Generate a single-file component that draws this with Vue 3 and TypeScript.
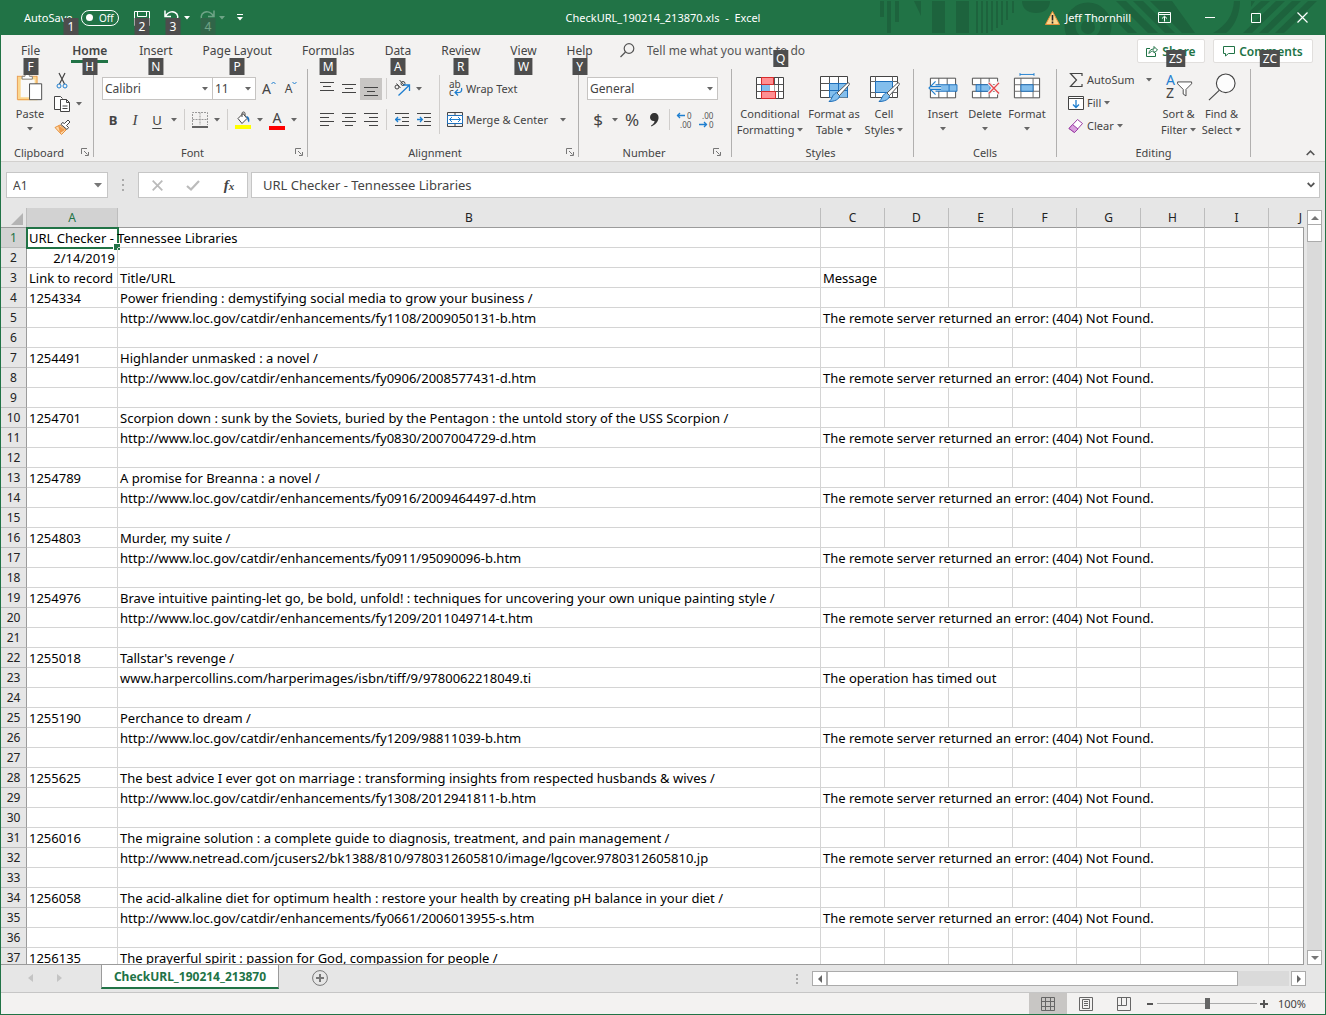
<script setup lang="ts">
import { h, ref } from 'vue'

const Caret = () => h('svg', { class: 'caret', viewBox: '0 0 6 4' }, [h('path', { d: 'M0 0h6L3 3.4z', fill: 'currentColor' })])
const Launcher = () =>
  h('button', { class: 'launcher', type: 'button', 'aria-label': 'More options' }, [
    h('svg', { width: 8, height: 8, viewBox: '0 0 8 8', fill: 'none', stroke: '#777' }, [
      h('path', { d: 'M.5 6V.5H6' }),
      h('path', { d: 'M3 3l3.5 3.5M7.5 4v3.5H4' }),
    ]),
  ])

interface Tab { name: string; key: string }
const tabs: Tab[] = [
  { name: 'File', key: 'F' },
  { name: 'Home', key: 'H' },
  { name: 'Insert', key: 'N' },
  { name: 'Page Layout', key: 'P' },
  { name: 'Formulas', key: 'M' },
  { name: 'Data', key: 'A' },
  { name: 'Review', key: 'R' },
  { name: 'View', key: 'W' },
  { name: 'Help', key: 'Y' },
]
const activeTab = ref('Home')

const columns = ['A', 'B', 'C', 'D', 'E', 'F', 'G', 'H', 'I', 'J']
const notFound = 'The remote server returned an error: (404) Not Found.'
const loc = 'http://www.loc.gov/catdir/enhancements/'

interface RecordEntry { id: string; title: string; url: string; message: string }
const records: RecordEntry[] = [
  { id: '1254334', title: 'Power friending : demystifying social media to grow your business /', url: loc + 'fy1108/2009050131-b.htm', message: notFound },
  { id: '1254491', title: 'Highlander unmasked : a novel /', url: loc + 'fy0906/2008577431-d.htm', message: notFound },
  { id: '1254701', title: 'Scorpion down : sunk by the Soviets, buried by the Pentagon : the untold story of the USS Scorpion /', url: loc + 'fy0830/2007004729-d.htm', message: notFound },
  { id: '1254789', title: 'A promise for Breanna : a novel /', url: loc + 'fy0916/2009464497-d.htm', message: notFound },
  { id: '1254803', title: 'Murder, my suite /', url: loc + 'fy0911/95090096-b.htm', message: notFound },
  { id: '1254976', title: 'Brave intuitive painting-let go, be bold, unfold! : techniques for uncovering your own unique painting style /', url: loc + 'fy1209/2011049714-t.htm', message: notFound },
  { id: '1255018', title: "Tallstar's revenge /", url: 'www.harpercollins.com/harperimages/isbn/tiff/9/9780062218049.ti', message: 'The operation has timed out' },
  { id: '1255190', title: 'Perchance to dream /', url: loc + 'fy1209/98811039-b.htm', message: notFound },
  { id: '1255625', title: 'The best advice I ever got on marriage : transforming insights from respected husbands & wives /', url: loc + 'fy1308/2012941811-b.htm', message: notFound },
  { id: '1256016', title: 'The migraine solution : a complete guide to diagnosis, treatment, and pain management /', url: 'http://www.netread.com/jcusers2/bk1388/810/9780312605810/image/lgcover.9780312605810.jp', message: notFound },
  { id: '1256058', title: 'The acid-alkaline diet for optimum health : restore your health by creating pH balance in your diet /', url: loc + 'fy0661/2006013955-s.htm', message: notFound },
]

type Row = [string, string, string]
const rows: Row[] = [
  ['URL Checker - Tennessee Libraries', '', ''],
  ['2/14/2019', '', ''],
  ['Link to record', 'Title/URL', 'Message'],
  ...records.flatMap((r): Row[] => [[r.id, r.title, ''], ['', r.url, r.message], ['', '', '']]),
  ['1256135', 'The prayerful spirit : passion for God, compassion for people /', ''],
]

// Long messages run over the neighbouring empty cells, which then show no gridline.
function isCovered(row: Row, col: number): boolean {
  const last = row[2] === notFound ? 6 : row[2].startsWith('The operation') ? 3 : -1
  return col >= 2 && col <= last
}

const zoom = ref(50)
const formula = ref('URL Checker - Tennessee Libraries')
const cellName = ref('A1')
</script>

<template>
  <div class="app">
    <header class="title-bar">
      <svg class="pattern" width="446" height="35" viewBox="0 0 446 35" aria-hidden="true">
        <g fill="#1d633d">
          <path d="M1 1h4v16H1zM8 1h4v32H8zM16 1h4v21h-4zM35 1h7v15zM53 1h13v32H53zM77 1h13v32H77zM97 1h2v32h-2zM102 1h2v32h-2zM107 1h2v32h-2zM112 1h2v30h-2zM117 1h2v27h-2zM122 1h2v24h-2zM127 1h2v19h-2zM133 1h2v12h-2z" />
          <path d="M143 1h28c0 8-6 12-14 12s-14-4-14-12z" />
          <circle cx="209" cy="27" r="7" />
          <path d="M237 1h10l32 32h-10zM254 1h10l32 32h-10zM271 1h22l23 32h-13zM237 12l21 21h-9l-12-12zM355 1h6c0 14-6 26-14 32h-13c14-8 20-18 21-32zM372 1h4l-4 6zM382 1h9l-20 18v-8zM397 1h9l-33 32h-9zM413 1h9l-33 32h-9zM429 1h9l-33 32h-9z" />
        </g>
        <circle cx="209" cy="26" r="18" fill="none" stroke="#1d633d" stroke-width="11" />
      </svg>

      <div class="quick">
        <span class="autosave">AutoSave<kbd class="tip tip-auto">1</kbd></span>
        <button type="button" class="toggle" aria-label="AutoSave"><i></i>Off</button>
        <button type="button" class="qbtn save" aria-label="Save">
          <svg width="18" height="18" viewBox="0 0 18 18" fill="none" stroke="#fff"><path d="M1.500 2.500h15v14h-15zM4.500 2.500v5h9v-5M5.500 16v-4h7v4" /></svg>
          <kbd class="tip">2</kbd>
        </button>
        <button type="button" class="qbtn undo" aria-label="Undo">
          <svg width="18" height="18" viewBox="0 0 18 18" fill="none" stroke="#fff" stroke-width="1.500"><path d="M1 1.500v6h6M1.500 7C4 3 8 2 11 3.500s4 6 1 9L9 16" /></svg>
          <kbd class="tip">3</kbd>
        </button>
        <Caret class="qcaret" />
        <button type="button" class="qbtn redo" aria-label="Redo" disabled>
          <svg width="18" height="18" viewBox="0 0 18 18" fill="none" stroke="#fff" stroke-width="1.500"><path d="M15 1.500v6H9M14.500 7C12 3 8 2 5 3.500s-4 6-1 9L8 16" /></svg>
          <kbd class="tip">4</kbd>
        </button>
        <Caret class="qcaret dim" />
        <button type="button" class="customize" aria-label="Customize Quick Access Toolbar">
          <svg width="6" height="7" viewBox="0 0 6 7" fill="#fff"><path d="M0 0h6v1H0zM0 3h6L3 6.500z" /></svg>
        </button>
      </div>

      <h1>CheckURL_190214_213870.xls&nbsp; -&nbsp; Excel</h1>

      <div class="window">
        <svg width="15" height="14" viewBox="0 0 15 14"><path d="M7.500 .5L14.500 13.500H.5z" fill="#fcd58a" stroke="#e8913a" /><path d="M7.500 4v5.500M7.500 10.500v2" stroke="#222" stroke-width="1.600" /></svg>
        <span class="user">Jeff Thornhill</span>
        <button type="button" aria-label="Ribbon Display Options"><svg width="13" height="11" viewBox="0 0 13 11" fill="none" stroke="#fff"><path d="M.5.500h12v10H.5zM.5 2.500h12M6.500 9.500V4.500M4 6.500L6.500 4.200 9 6.500" /></svg></button>
        <button type="button" aria-label="Minimize"><svg width="10" height="10" viewBox="0 0 10 10" stroke="#fff"><path d="M0 4.500h10" /></svg></button>
        <button type="button" aria-label="Maximize"><svg width="10" height="10" viewBox="0 0 10 10" fill="none" stroke="#fff"><path d="M.5.500h9v9h-9z" /></svg></button>
        <button type="button" aria-label="Close"><svg width="11" height="11" viewBox="0 0 11 11" stroke="#fff" stroke-width="1.200"><path d="M.5.500l10 10M10.500.500l-10 10" /></svg></button>
      </div>
    </header>

    <nav class="tabs">
      <button v-for="t in tabs" :key="t.name" type="button" class="tab" :class="{ active: t.name === activeTab }" @click="activeTab = t.name">
        {{ t.name }}<kbd class="tip">{{ t.key }}</kbd>
      </button>
      <label class="tell">
        <svg width="15" height="15" viewBox="0 0 15 15" fill="none" stroke="#555" stroke-width="1.200"><circle cx="9" cy="5.500" r="4.800" /><path d="M5.500 9L.5 14" /></svg>
        <input type="text" placeholder="Tell me what you want to do" aria-label="Tell me what you want to do" />
        <kbd class="tip">Q</kbd>
      </label>
      <div class="actions">
        <button type="button" class="pill">
          <svg width="12" height="12" viewBox="0 0 12 12" fill="none" stroke="#217346"><path d="M4 3.500H.5v8h9V8M3 8.500c0-3 2-4.500 5-4.500V1.500L11.500 5 8 8V6C6 6 4.500 6.500 3 8.500z" /></svg>
          Share<kbd class="tip">ZS</kbd>
        </button>
        <button type="button" class="pill wide">
          <svg width="12" height="12" viewBox="0 0 12 12" fill="none" stroke="#217346"><path d="M.5 1.500h11v7H5.500L2.500 11V8.500h-2z" /></svg>
          Comments<kbd class="tip">ZC</kbd>
        </button>
      </div>
    </nav>

    <section class="ribbon">
      <div class="group clipboard">
        <div class="content">
          <button type="button" class="big paste">
            <svg width="28" height="30" viewBox="0 0 28 30"><path d="M2.500 4.500h18v22h-18z" fill="#fafafa" stroke="#fbd78f" stroke-width="3" /><path d="M.5 2.500h21M.5 2v25.500h13M21.500 2v8" fill="none" stroke="#ea9a49" /><path d="M5.500 5.500v-3h3c0-3 5-3 5 0h3v3z" fill="#fff" stroke="#777" /><path d="M13.500 10.500h13v17h-13z" fill="#fff" stroke="#444" /></svg>
            <span>Paste</span><Caret />
          </button>
          <div class="stack">
            <div class="line"><button type="button" class="ib" aria-label="Cut"><svg width="12" height="16" viewBox="0 0 12 16" fill="none"><path d="M3 0l5.500 11M9 0L3.500 11" stroke="#444" stroke-width="1.200" /><circle cx="3" cy="13" r="2" stroke="#1e7fd0" /><circle cx="9" cy="13" r="2" stroke="#1e7fd0" /></svg></button></div>
            <div class="line"><button type="button" class="ib" aria-label="Copy"><svg width="17" height="16" viewBox="0 0 17 16" fill="#fff" stroke="#444"><path d="M6 13.500H.5v-13h6l2 2" /><path d="M6.500 3.500h6l3 3v9h-9zM12.500 3.500v3h3M8.500 10h5M8.500 12.500h5" /></svg></button><button type="button" class="drop" aria-label="Copy options"><Caret /></button></div>
            <div class="line"><button type="button" class="ib" aria-label="Format Painter"><svg width="17" height="16" viewBox="0 0 17 16"><path d="M1 8.500l5-2.500 6 5-4.500 4.500z" fill="#fbd9ad" stroke="#e8913a" /><path d="M6 14l5-3-7-5" fill="#ee9a4b" /><path d="M7 5.500l6 5 1.500-2-2-2L16 3l-2-2-3.500 3.500L8.500 3.500z" fill="#fff" stroke="#444" /></svg></button></div>
          </div>
        </div>
        <footer><span>Clipboard</span><Launcher /></footer>
      </div>
      <i class="gsep"></i>

      <div class="group font">
        <div class="content col">
          <div class="line">
            <label class="combo face"><select aria-label="Font"><option>Calibri</option></select><Caret /></label>
            <label class="combo size"><select aria-label="Font size"><option>11</option></select><Caret /></label>
            <button type="button" class="ib grow" aria-label="Increase font size"><span class="lg">A</span><svg width="5" height="4" viewBox="0 0 5 4" fill="none" stroke="#1e7fd0"><path d="M.5 3l2-2 2 2" /></svg></button>
            <button type="button" class="ib grow" aria-label="Decrease font size"><span>A</span><svg width="5" height="4" viewBox="0 0 5 4" fill="none" stroke="#1e7fd0"><path d="M.5 1l2 2 2-2" /></svg></button>
          </div>
          <div class="line">
            <button type="button" class="ib b">B</button>
            <button type="button" class="ib i">I</button>
            <button type="button" class="ib u">U</button>
            <button type="button" class="drop" aria-label="Underline options"><Caret /></button>
            <i class="sep"></i>
            <button type="button" class="ib" aria-label="Borders"><svg width="16" height="16" viewBox="0 0 16 16" fill="none"><path d="M.5 13V.5h15V13M8 .5V13M.5 7.500h15" stroke="#999" stroke-dasharray="2 1" /><path d="M0 15h16" stroke="#333" stroke-width="1.500" /></svg></button>
            <button type="button" class="drop" aria-label="Border options"><Caret /></button>
            <i class="sep"></i>
            <button type="button" class="ib" aria-label="Fill color"><svg width="16" height="18" viewBox="0 0 16 18"><path d="M3 7.500L8 2.500l4 5-5 5z" fill="#fff" stroke="#444" /><path d="M7 6V2.500c0-2 3-2 3 0V5" fill="none" stroke="#444" /><path d="M11 5c3 0 4 3 3 6.500-1.500-1-1-3-3-6.500z" fill="#1e6fba" /><path d="M0 14h16v4H0z" fill="#ff0" /></svg></button>
            <button type="button" class="drop" aria-label="Fill color options"><Caret /></button>
            <button type="button" class="ib fc" aria-label="Font color"><span>A</span><i></i></button>
            <button type="button" class="drop" aria-label="Font color options"><Caret /></button>
          </div>
        </div>
        <footer><span>Font</span><Launcher /></footer>
      </div>
      <i class="gsep"></i>

      <div class="group alignment">
        <div class="content">
          <div class="col">
            <div class="line">
              <button type="button" class="ib" aria-label="Top align"><svg width="14" height="16" viewBox="0 0 14 16" stroke="#444"><path d="M0 1.500h14M3 5.500h8M0 9.500h14" /></svg></button>
              <button type="button" class="ib" aria-label="Middle align"><svg width="14" height="16" viewBox="0 0 14 16" stroke="#444"><path d="M0 3.500h14M3 7.500h8M0 11.500h14" /></svg></button>
              <button type="button" class="ib on" aria-label="Bottom align"><svg width="14" height="16" viewBox="0 0 14 16" stroke="#444"><path d="M0 6.500h14M3 10.500h8M0 14.500h14" /></svg></button>
              <i class="sep"></i>
              <button type="button" class="ib" aria-label="Orientation"><svg width="18" height="17" viewBox="0 0 18 17" fill="none"><g stroke="#444"><circle cx="4" cy="7" r="2" /><path d="M3.500 3.500l4 4.500M6.500 0l4.500 5" /><circle cx="10" cy="3.500" r="2" /></g><path d="M5.500 15.500L16 5.500M10.500 5h6v6" stroke="#1e7fd0" stroke-width="1.300" /></svg></button>
              <button type="button" class="drop" aria-label="Orientation options"><Caret /></button>
            </div>
            <div class="line">
              <button type="button" class="ib" aria-label="Align left"><svg width="14" height="14" viewBox="0 0 14 14" stroke="#444"><path d="M0 .5h14M0 4.500h9M0 8.500h14M0 12.500h9" /></svg></button>
              <button type="button" class="ib" aria-label="Center"><svg width="14" height="14" viewBox="0 0 14 14" stroke="#444"><path d="M0 .5h14M3 4.500h8M0 8.500h14M3 12.500h8" /></svg></button>
              <button type="button" class="ib" aria-label="Align right"><svg width="14" height="14" viewBox="0 0 14 14" stroke="#444"><path d="M0 .5h14M5 4.500h9M0 8.500h14M5 12.500h9" /></svg></button>
              <i class="sep"></i>
              <button type="button" class="ib" aria-label="Decrease indent"><svg width="14" height="14" viewBox="0 0 14 14" fill="none" stroke="#444"><path d="M0 .5h14M7 4.500h7M7 8.500h7M0 12.500h14" /><path d="M0 6.500h5.500M3 4L.7 6.500 3 9" stroke="#1e7fd0" stroke-width="1.300" /></svg></button>
              <button type="button" class="ib" aria-label="Increase indent"><svg width="14" height="14" viewBox="0 0 14 14" fill="none" stroke="#444"><path d="M0 .5h14M7 4.500h7M7 8.500h7M0 12.500h14" /><path d="M0 6.500h5.500M3 4l2.300 2.500L3 9" stroke="#1e7fd0" stroke-width="1.300" /></svg></button>
            </div>
          </div>
          <i class="sep long"></i>
          <div class="col">
            <div class="line">
              <button type="button" class="text-btn"><svg class="wrap-icon" width="16" height="18" viewBox="0 0 16 18"><text x="2" y="8">ab</text><text x="2" y="16">c</text><path d="M14.500 8c1 4-1 5-6.500 4.500M11 9.500l-3 3 3 3" fill="none" stroke="#1e7fd0" stroke-width="1.200" /></svg>Wrap Text</button>
            </div>
            <div class="line">
              <button type="button" class="text-btn"><svg width="16" height="16" viewBox="0 0 16 16" fill="none"><path d="M.5 .5h15v14H.5zM.5 3.500h15M.5 11.500h15M8 .5v3M8 11.500v3" stroke="#444" /><path d="M.5 3.500h15v8H.5z" fill="#fff" stroke="#1e6fba" /><path d="M2.500 7.500h11M5 5L2.500 7.500 5 10M11 5l2.500 2.500L11 10" stroke="#1e7fd0" /></svg>Merge &amp; Center</button>
              <button type="button" class="drop merge-drop" aria-label="Merge options"><Caret /></button>
            </div>
          </div>
        </div>
        <footer><span>Alignment</span><Launcher /></footer>
      </div>
      <i class="gsep"></i>

      <div class="group number">
        <div class="content col">
          <div class="line">
            <label class="combo format"><select aria-label="Number format"><option>General</option></select><Caret /></label>
          </div>
          <div class="line">
            <button type="button" class="ib sym">$</button>
            <button type="button" class="drop" aria-label="Currency options"><Caret /></button>
            <button type="button" class="ib sym">%</button>
            <button type="button" class="ib" aria-label="Comma style"><svg width="9" height="14" viewBox="0 0 9 14"><path d="M4 0c3 0 5 2 4.500 5.500C8 9 5 12 1.500 13.500L1 12.500C3.500 11 4.500 9.500 4.500 8 2 8.500 0 6.500 0 4.200S2 0 4 0z" fill="#333" /></svg></button>
            <i class="sep"></i>
            <button type="button" class="ib" aria-label="Increase decimal"><svg class="dec" width="16" height="16" viewBox="0 0 16 16"><text x="10" y="7">0</text><text x="3" y="16">.00</text><path d="M0 3.500h8M3 1L.5 3.500 3 6" /></svg></button>
            <button type="button" class="ib" aria-label="Decrease decimal"><svg class="dec" width="16" height="16" viewBox="0 0 16 16"><text x="3" y="7">.00</text><text x="10" y="16">0</text><path d="M0 12.500h8M5 10l2.500 2.500L5 15" /></svg></button>
          </div>
        </div>
        <footer><span>Number</span><Launcher /></footer>
      </div>
      <i class="gsep"></i>

      <div class="group styles">
        <div class="content">
          <button type="button" class="big cond">
            <svg width="28" height="26" viewBox="0 0 28 26" fill="none"><path d="M.5 2.500h27v21H.5z" fill="#fff" stroke="#444" /><path d="M5.500 2.500v21M18.500 2.500v21M22.500 2.500v21M.5 9.500h27M.5 16.500h27" stroke="#555" /><path d="M5.500 9.500h8v7h-8z" fill="#83beec" stroke="#1e6fba" /><path d="M13.500 10h5v6h-5z" fill="#fff" /><path d="M5.500 2.500h12v7h-12zM5.500 16.500h14v7h-14z" fill="#ff8f92" stroke="#d92b2b" /></svg>
            <span>Conditional</span><span>Formatting <Caret /></span>
          </button>
          <button type="button" class="big fmt">
            <svg width="28" height="28" viewBox="0 0 28 28" fill="none"><path d="M.5 2.500h27v21H.5z" fill="#fff" stroke="#444" /><path d="M9.500 9.500h18v14h-18z" fill="#83beec" /><path d="M9.500 2.500v7M18.500 2.500v7M.5 9.500h9M.5 16.500h9" stroke="#555" /><path d="M9.500 23.500v-14h18v14M18.500 9.500v14M9.500 16.500h18" stroke="#1e6fba" /><path d="M15 19.500c2-2 4.500-.5 4.500 2 0 4-5 6-10.500 6 3-2 3-6 6-8z" fill="#83beec" stroke="#1e6fba" /><path d="M17 19L27 9.500c2-1.500 3 0 2 1.500L19.500 21.500z" fill="#fff" stroke="#555" /></svg>
            <span>Format as</span><span>Table <Caret /></span>
          </button>
          <button type="button" class="big cell">
            <svg width="28" height="28" viewBox="0 0 28 28" fill="none"><path d="M.5 2.500h27v21H.5z" fill="#fff" stroke="#444" /><path d="M5.500 2.500v21M22.500 2.500v21M.5 7.500h27M.5 18.500h27" stroke="#666" /><path d="M5.500 7.500h17v11h-17z" fill="#83beec" stroke="#1e6fba" /><path d="M15 19.500c2-2 4.500-.5 4.500 2 0 4-5 6-10.500 6 3-2 3-6 6-8z" fill="#83beec" stroke="#1e6fba" /><path d="M17 19L27 9.500c2-1.500 3 0 2 1.500L19.500 21.500z" fill="#fff" stroke="#555" /></svg>
            <span>Cell</span><span>Styles <Caret /></span>
          </button>
        </div>
        <footer><span>Styles</span></footer>
      </div>
      <i class="gsep"></i>

      <div class="group cells">
        <div class="content">
          <button type="button" class="big">
            <svg width="32" height="30" viewBox="0 0 32 30" fill="none"><path d="M2.500 4.500h27v21h-27z" fill="#fff" stroke="#444" /><path d="M11.500 4.500v21M20.500 4.500v21" stroke="#555" /><path d="M5 11.500h26v7H5z" fill="#83beec" stroke="#1e6fba" /><path d="M22.500 11.500v7" stroke="#1e6fba" /><path d="M8 8l-7 7 7 7v-4.500h6v-5H8z" fill="#f3f2f1" /><path d="M14 13.500H3M14 16.500H3M8 8l-7 7 7 7" stroke="#1e7fd0" stroke-width="1.200" /></svg>
            <span>Insert</span><Caret />
          </button>
          <button type="button" class="big">
            <svg width="32" height="30" viewBox="0 0 32 30" fill="none"><path d="M2.500 4.500h27v7h-27zM2.500 18.500h27v7h-27z" fill="#fff" stroke="#444" /><path d="M11.500 4.500v7M20.500 4.500v7M11.500 18.500v7M20.500 18.500v7" stroke="#555" /><path d="M6.500 11.500h15v7h-15zM11.500 11.500v7" fill="#83beec" stroke="#1e6fba" /><path d="M20 9l11 12M31 9L20 21" stroke="#f3f2f1" stroke-width="4" /><path d="M20 9.500l11 11.500M31 9.500L20 21" stroke="#e8474c" stroke-width="1.500" /></svg>
            <span>Delete</span><Caret />
          </button>
          <button type="button" class="big">
            <svg width="32" height="30" viewBox="0 0 32 30" fill="none"><path d="M2.500 4.500h27v21h-27z" fill="#fff" stroke="#444" /><path d="M9.500 4.500v21M22.500 4.500v21M2.500 11.500h27M2.500 18.500h27" stroke="#666" /><path d="M9.500 11.500h13v7h-13z" fill="#83beec" stroke="#1e6fba" /><path d="M8.500 .5h15M8.500-1v3M23.500-1v3" stroke="#1e7fd0" /></svg>
            <span>Format</span><Caret />
          </button>
        </div>
        <footer><span>Cells</span></footer>
      </div>
      <i class="gsep"></i>

      <div class="group editing">
        <div class="content">
          <div class="stack wide-stack">
            <div class="line"><button type="button" class="text-btn"><svg width="16" height="16" viewBox="0 0 16 16" fill="none" stroke="#444" stroke-width="1.200"><path d="M14 4V1.500H2.500L8.500 8l-6 6.500H14V12" /></svg>AutoSum</button><button type="button" class="drop sum-drop" aria-label="AutoSum options"><Caret /></button></div>
            <div class="line"><button type="button" class="text-btn"><svg width="16" height="16" viewBox="0 0 16 16" fill="none"><path d="M.5 1.500h15v13H.5z" fill="#fff" stroke="#444" /><path d="M.5 3.500h15" stroke="#444" /><path d="M8 5v7.500M5 9.500l3 3 3-3" stroke="#1e7fd0" stroke-width="1.300" /></svg>Fill<Caret /></button></div>
            <div class="line"><button type="button" class="text-btn"><svg width="16" height="16" viewBox="0 0 16 16"><path d="M9.500 1.500l5 4-8 9-5.500-4z" fill="#fff" stroke="#9b3fa5" /><path d="M4.500 6.500L10 11l-3.500 3.500-5.500-4z" fill="#d9a0de" stroke="#9b3fa5" /></svg>Clear<Caret /></button></div>
          </div>
          <button type="button" class="big">
            <svg class="sort" width="30" height="30" viewBox="0 0 30 30"><text x="1" y="12" fill="#1e7fd0">A</text><text x="1" y="26" fill="#444">Z</text><path d="M13.500 8.500h15v2l-6 6v7l-3-2v-5l-6-6z" fill="#fff" stroke="#444" /></svg>
            <span>Sort &amp;</span><span>Filter <Caret /></span>
          </button>
          <button type="button" class="big">
            <svg width="30" height="30" viewBox="0 0 30 30" fill="none" stroke="#444" stroke-width="1.200"><circle cx="19" cy="10" r="10" fill="#fdfdfd" /><path d="M12 17.500L1 28" /></svg>
            <span>Find &amp;</span><span>Select <Caret /></span>
          </button>
        </div>
        <footer><span>Editing</span></footer>
      </div>
      <i class="gsep"></i>
      <button type="button" class="collapse" aria-label="Collapse the Ribbon"><svg width="9" height="6" viewBox="0 0 9 6" fill="none" stroke="#555" stroke-width="1.600"><path d="M.7 5l3.800-3.800L8.300 5" /></svg></button>
    </section>

    <section class="formula-bar">
      <label class="name-box"><input v-model="cellName" type="text" aria-label="Name Box" /><svg width="8" height="5" viewBox="0 0 8 5"><path d="M0 0h8L4 4.500z" fill="#777" /></svg></label>
      <svg class="grip" width="2" height="12" viewBox="0 0 2 12" fill="#aaa"><path d="M0 0h2v2H0zM0 5h2v2H0zM0 10h2v2H0z" /></svg>
      <div class="fx">
        <button type="button" aria-label="Cancel"><svg width="11" height="11" viewBox="0 0 11 11" stroke="#bbb" stroke-width="1.800"><path d="M.7.700l9.600 9.600M10.300.700L.7 10.300" /></svg></button>
        <button type="button" aria-label="Enter"><svg width="14" height="11" viewBox="0 0 14 11" fill="none" stroke="#bbb" stroke-width="2.200"><path d="M1 6l4 3.500L13 1" /></svg></button>
        <button type="button" class="fx-btn" aria-label="Insert Function"><span>f</span><small>x</small></button>
      </div>
      <label class="formula"><input v-model="formula" type="text" aria-label="Formula" /><svg width="8" height="6" viewBox="0 0 8 6" fill="none" stroke="#555" stroke-width="1.800"><path d="M.7 1L4 4.300 7.300 1" /></svg></label>
    </section>

    <main class="sheet-area">
      <div class="sheet">
        <table>
          <colgroup><col class="c-num" /><col class="c-a" /><col class="c-b" /><col v-for="n in 8" :key="n" class="c-x" /></colgroup>
          <thead>
            <tr>
              <th class="corner"><svg width="12" height="12" viewBox="0 0 12 12" fill="#b4b4b4"><path d="M12 0v12H0z" /></svg></th>
              <th v-for="c in columns" :key="c" scope="col" :class="{ sel: c === 'A' }">{{ c }}</th>
            </tr>
          </thead>
          <tbody>
            <tr v-for="(r, i) in rows" :key="i">
              <th scope="row" :class="{ sel: i === 0 }">{{ i + 1 }}</th>
              <td v-for="(c, j) in columns" :key="c" :class="{ covered: isCovered(r, j), date: i === 1 && j === 0 }">
                <span v-if="i === 0 && j === 0" class="selection"></span><span class="value">{{ r[j] ?? '' }}</span>
              </td>
            </tr>
          </tbody>
        </table>
      </div>
      <div class="vscroll">
        <button type="button" aria-label="Scroll up"><svg width="8" height="4" viewBox="0 0 8 4"><path d="M4 0l4 4H0z" fill="#777" /></svg></button>
        <i class="vthumb"></i>
        <button type="button" class="end" aria-label="Scroll down"><svg width="8" height="4" viewBox="0 0 8 4"><path d="M0 0h8L4 4z" fill="#777" /></svg></button>
      </div>
    </main>

    <section class="sheet-tabs">
      <div class="arrows">
        <svg width="5" height="8" viewBox="0 0 5 8"><path d="M5 0v8L0 4z" fill="#c4c4c4" /></svg>
        <svg width="5" height="8" viewBox="0 0 5 8"><path d="M0 0v8l5-4z" fill="#c4c4c4" /></svg>
      </div>
      <button type="button" class="sheet-tab">CheckURL_190214_213870</button>
      <button type="button" class="add" aria-label="New sheet"><svg width="16" height="16" viewBox="0 0 16 16" fill="none" stroke="#777"><circle cx="8" cy="8" r="7.400" /><path d="M8 4v8M4 8h8" stroke-width="2" /></svg></button>
      <div class="hscroll">
        <svg class="grip" width="2" height="10" viewBox="0 0 2 10" fill="#aaa"><path d="M0 0h2v2H0zM0 4h2v2H0zM0 8h2v2H0z" /></svg>
        <button type="button" aria-label="Scroll left"><svg width="4" height="8" viewBox="0 0 4 8"><path d="M4 0v8L0 4z" fill="#666" /></svg></button>
        <div class="htrack"><i></i></div>
        <button type="button" aria-label="Scroll right"><svg width="4" height="8" viewBox="0 0 4 8"><path d="M0 0v8l4-4z" fill="#666" /></svg></button>
      </div>
    </section>

    <footer class="status">
      <button type="button" class="view current" aria-label="Normal"><svg width="14" height="14" viewBox="0 0 14 14" fill="none" stroke="#666"><path d="M.5.500h13v13H.5zM4.500.500v13M9.500.500v13M.5 4.500h13M.5 9.500h13" /></svg></button>
      <button type="button" class="view" aria-label="Page Layout"><svg width="14" height="14" viewBox="0 0 14 14" fill="none" stroke="#666"><path d="M.5.500h13v13H.5zM3.500 2.500h7v9h-7zM5 4.500h4M5 6.500h4M5 8.500h4" /></svg></button>
      <button type="button" class="view" aria-label="Page Break Preview"><svg width="14" height="14" viewBox="0 0 14 14" fill="none" stroke="#666"><path d="M.5.500h13v13H.5zM.5 8.500h9v-8M4.500.500v8" /></svg></button>
      <button type="button" class="step" aria-label="Zoom out"><svg width="8" height="8" viewBox="0 0 8 8"><path d="M1 3h6v2H1z" fill="#555" /></svg></button>
      <input v-model.number="zoom" class="zoom" type="range" min="0" max="100" aria-label="Zoom" />
      <button type="button" class="step" aria-label="Zoom in"><svg width="8" height="8" viewBox="0 0 8 8"><path d="M3 0h2v3h3v2H5v3H3V5H0V3h3z" fill="#555" /></svg></button>
      <span class="percent">100%</span>
    </footer>
  </div>
</template>

<style>
html,
body {
  margin: 0;
  overflow: hidden;
}
</style>

<style scoped>
.app {
  box-sizing: border-box;
  display: flex;
  flex-direction: column;
  height: 100vh;
  border: 1px solid #217346;
  border-top: 0;
  background: #e6e6e6;
  color: #444;
  font-family: 'Noto Sans', 'Open Sans', sans-serif;
  font-size: 11px;
  overflow: hidden;
}
.app * {
  box-sizing: border-box;
}
button,
input,
select {
  margin: 0;
  padding: 0;
  border: 0;
  border-radius: 0;
  background: none;
  color: inherit;
  font: inherit;
  outline: 0;
}
svg {
  display: block;
  flex: none;
  overflow: visible;
}
i {
  font-style: normal;
}
.caret {
  width: 6px;
  height: 4px;
  color: #666;
}
.tip {
  position: absolute;
  top: 23px;
  left: 50%;
  min-width: 15px;
  height: 17px;
  padding: 0 3px;
  transform: translateX(-50%);
  background: #4d4d4d;
  color: #fff;
  font: 12px/17px 'Noto Sans', sans-serif;
  text-align: center;
  z-index: 2;
}

/* Title bar */
.title-bar {
  position: relative;
  display: grid;
  grid-template-columns: 1fr auto 1fr;
  align-items: center;
  flex: none;
  height: 35px;
  background: #217346;
  color: #fff;
}
.pattern {
  position: absolute;
  top: 0;
  right: 0;
  overflow: hidden;
}
.title-bar h1 {
  margin: 0;
  font-size: 11px;
  font-weight: 400;
}
.quick {
  display: flex;
  align-items: center;
  height: 35px;
  padding-left: 23px;
}
.autosave {
  position: relative;
  width: 57px;
}
.quick .tip {
  top: 9px;
}
.autosave .tip-auto {
  top: 8px;
  left: 47px;
}
.toggle {
  display: flex;
  align-items: center;
  gap: 6px;
  width: 38px;
  height: 16px;
  margin-right: 14px;
  padding-left: 4px;
  border: 1px solid #fff;
  border-radius: 8px;
  font-size: 10px;
  line-height: 14px;
}
.toggle i {
  flex: none;
  width: 7px;
  height: 7px;
  border-radius: 50%;
  background: #fff;
}
.qbtn {
  position: relative;
  display: grid;
  place-items: center;
  width: 18px;
  height: 18px;
  margin-right: 2px;
}
.save {
  margin-right: 13px;
}
.redo {
  opacity: 0.35;
}
.qcaret {
  margin-right: 9px;
  color: #fff;
}
.dim {
  margin-right: 12px;
  opacity: 0.35;
}
.window {
  position: relative;
  display: flex;
  align-items: center;
  justify-content: flex-end;
}
.user {
  margin: 0 10px 0 5px;
  font-size: 11px;
}
.window button {
  display: grid;
  place-items: center;
  width: 46px;
  height: 34px;
}

/* Tabs */
.tabs {
  display: flex;
  flex: none;
  height: 34px;
  padding-left: 5px;
  background: #f3f2f1;
}
.tab {
  position: relative;
  height: 31px;
  padding: 0 15px;
  font-size: 12px;
}
.tab.active {
  padding: 0 17px;
  font-weight: 600;
}
.tab.active::after {
  content: '';
  position: absolute;
  right: 16px;
  bottom: 3px;
  left: 16px;
  height: 3px;
  background: #217346;
}
.tell {
  position: relative;
  display: flex;
  align-items: center;
  gap: 12px;
  height: 31px;
  margin-left: 12px;
}
.tell input {
  width: 180px;
  font-size: 12px;
}
.tell input::placeholder {
  color: #555;
  opacity: 1;
}
.tell .tip {
  top: 15px;
  left: 161px;
}
.actions {
  display: flex;
  gap: 8px;
  margin: 4px 12px 0 auto;
}
.pill {
  position: relative;
  display: flex;
  align-items: center;
  justify-content: center;
  gap: 4px;
  width: 68px;
  height: 24px;
  border: 1px solid #e1dfdd;
  border-radius: 2px;
  background: #fff;
  color: #217346;
  font-size: 12px;
  font-weight: 600;
}
.pill.wide {
  width: 100px;
}
.pill .tip {
  top: 10px;
  left: 57%;
}

/* Ribbon */
.ribbon {
  display: flex;
  flex: none;
  height: 93px;
  border-bottom: 1px solid #d2d0ce;
  background: #f3f2f1;
}
.group {
  display: flex;
  flex: none;
  flex-direction: column;
}
.clipboard {
  width: 92px;
}
.font {
  width: 213px;
}
.alignment {
  width: 270px;
}
.number {
  width: 152px;
}
.styles {
  width: 181px;
}
.cells {
  width: 142px;
}
.editing {
  width: 193px;
}
.gsep {
  flex: none;
  width: 1px;
  height: 88px;
  background: #b1b0af;
}
.content {
  display: flex;
  height: 75px;
  padding-left: 8px;
}
.col {
  display: flex;
  flex-direction: column;
  gap: 8px;
  padding-top: 8px;
}
.styles .content {
  padding-left: 2px;
}
.group footer {
  display: flex;
  align-items: center;
  height: 16px;
  padding-right: 4px;
}
.number footer {
  padding-right: 10px;
}
.cells footer,
.editing footer {
  padding-right: 0;
}
.group footer span {
  flex: 1;
  text-align: center;
}
.launcher {
  display: flex;
  width: 8px;
  height: 8px;
  margin-left: 4px;
}
.line {
  display: flex;
  align-items: center;
  height: 23px;
}
.wide-stack {
  width: 92px;
  margin-top: -1px;
}
.ib {
  display: grid;
  flex: none;
  place-items: center;
  width: 22px;
  height: 22px;
  font-size: 13px;
  line-height: 18px;
}
.on {
  background: #c8c6c4;
}
.drop {
  display: grid;
  flex: none;
  place-items: center;
  width: 12px;
  height: 22px;
}
.sep {
  flex: none;
  width: 1px;
  height: 21px;
  margin: 0 4px;
  background: #d0cecc;
}
.sep.long {
  height: 59px;
  margin-top: 6px;
}
.combo {
  position: relative;
  display: block;
  height: 23px;
  border: 1px solid #c6c4c2;
  background: #fff;
}
.combo select {
  display: block;
  width: 100%;
  height: 21px;
  padding-left: 2px;
  appearance: none;
  font-size: 12px;
}
.combo .caret {
  position: absolute;
  top: 9px;
  right: 4px;
  pointer-events: none;
}
.face {
  width: 111px;
}
.size {
  width: 43px;
  margin-right: 2px;
  border-left: 0;
}
.format {
  width: 131px;
}
.grow {
  display: flex;
  justify-content: center;
  font-size: 12px;
}
.grow svg {
  align-self: flex-start;
  margin-top: 3px;
}
.grow .lg {
  font-size: 14px;
}
.b {
  font-weight: 700;
}
.i {
  font-family: 'Liberation Serif', serif;
  font-size: 15px;
  font-style: italic;
}
.u {
  text-decoration: underline;
  text-underline-offset: 3px;
}
.fc {
  display: flex;
  flex-direction: column;
  align-items: center;
  justify-content: flex-end;
  padding-bottom: 1px;
  font-size: 14px;
  line-height: 16px;
}
.fc i {
  width: 16px;
  height: 4px;
  background: #f00;
}
.sym {
  font-size: 17px;
}
.dec text {
  fill: #555;
  font-size: 8px;
}
.dec path {
  fill: none;
  stroke: #1e7fd0;
  stroke-width: 1.3;
}
.text-btn {
  display: flex;
  align-items: center;
  gap: 3px;
  height: 22px;
  padding-left: 3px;
}
.wrap-icon text {
  fill: #444;
  font-size: 10px;
}
.merge-drop {
  margin-left: 9px;
}
.sum-drop {
  margin-left: 8px;
}
.big {
  display: flex;
  flex: none;
  flex-direction: column;
  align-items: center;
  width: 43px;
  padding-top: 5px;
  line-height: 16px;
  white-space: nowrap;
}
.big > svg:first-child {
  height: 28px;
  margin-bottom: 4px;
}
.big > .caret {
  margin-top: 5px;
}
.big span .caret {
  display: inline-block;
  vertical-align: 2px;
}
.paste {
  width: 42px;
}
.cells .big {
  width: 42px;
}
.cond {
  width: 72px;
}
.fmt {
  width: 56px;
}
.cell {
  width: 44px;
}
.sort text {
  font-size: 15px;
}
.collapse {
  align-self: flex-end;
  margin: 0 10px 5px auto;
}

/* Formula bar */
.formula-bar {
  display: flex;
  flex: none;
  align-items: center;
  height: 46px;
  padding: 0 5px;
}
.name-box,
.fx,
.formula {
  display: flex;
  align-items: center;
  height: 26px;
  border: 1px solid #c6c6c6;
  background: #fff;
}
.name-box {
  width: 102px;
  padding: 0 5px 0 6px;
}
.name-box input {
  flex: 1;
  min-width: 0;
  font-size: 12px;
}
.grip {
  margin: 0 14px;
}
.fx {
  width: 110px;
  margin-right: 3px;
}
.fx button {
  display: grid;
  flex: 1;
  place-items: center;
}
.fx .fx-btn {
  display: flex;
  align-items: baseline;
  justify-content: center;
  color: #444;
  font: italic 700 15px 'Liberation Serif', serif;
}
.fx-btn small {
  font-size: 11px;
}
.formula {
  flex: 1;
  padding: 0 4px 0 11px;
}
.formula input {
  flex: 1;
  font-size: 13px;
}

/* Sheet */
.sheet-area {
  display: flex;
  flex: 1;
  min-height: 0;
}
.sheet {
  position: relative;
  flex: 1;
  min-width: 0;
  overflow: hidden;
  background: linear-gradient(#e6e6e6 20px, #fff 20px);
  border-bottom: 1px solid #9b9b9b;
}
.sheet::after {
  content: '';
  position: absolute;
  top: 19px;
  right: 0;
  bottom: 0;
  width: 1px;
  background: #9b9b9b;
}
table {
  width: 1332px;
  table-layout: fixed;
  border-collapse: separate;
  border-spacing: 0;
  color: #000;
  font-size: 13px;
}
.c-num {
  width: 26px;
}
.c-a {
  width: 91px;
}
.c-b {
  width: 703px;
}
.c-x {
  width: 64px;
}
th,
td {
  height: 20px;
  padding: 0;
  line-height: 19px;
  white-space: nowrap;
}
th {
  background: #e6e6e6;
  color: #222;
  font-size: 12px;
  font-weight: 400;
  text-align: center;
}
thead th {
  border-right: 1px solid #bdbdbd;
  border-bottom: 1px solid #9b9b9b;
}
tbody th {
  border-right: 1px solid #9b9b9b;
  border-bottom: 1px solid #bdbdbd;
}
th.sel {
  background: #d2d2d2;
  color: #217346;
}
.corner svg {
  margin: 3px 0 0 10px;
}
td {
  position: relative;
  padding: 2px 0 0 2px;
  border-right: 1px solid #d4d4d4;
  border-bottom: 1px solid #d4d4d4;
  line-height: 17px;
}
td.covered {
  border-right-color: transparent;
}
td.date {
  padding-right: 2px;
  text-align: right;
}
.value {
  position: relative;
  z-index: 1;
}
.selection {
  position: absolute;
  inset: -1px -2px -2px -1px;
  border: 2px solid #217346;
}
.selection::after {
  content: '';
  position: absolute;
  right: -3px;
  bottom: -3px;
  width: 6px;
  height: 6px;
  border: 1px solid #fff;
  border-right: 0;
  border-bottom: 0;
  background: #217346;
}
.vscroll {
  display: flex;
  flex: none;
  flex-direction: column;
  width: 15px;
  margin: 2px 3px 0;
  background: #dadada;
}
.vscroll button,
.hscroll button {
  display: grid;
  flex: none;
  place-items: center;
  width: 15px;
  height: 15px;
  border: 1px solid #ababab;
  background: #fff;
}
.vthumb {
  height: 17px;
  border: 1px solid #ababab;
  border-top: 0;
  background: #fff;
}
.vscroll .end {
  margin-top: auto;
}

/* Sheet tabs */
.sheet-tabs {
  display: flex;
  flex: none;
  height: 27px;
}
.arrows {
  display: flex;
  gap: 24px;
  width: 100px;
  padding: 9px 0 0 27px;
}
.sheet-tab {
  width: 178px;
  height: 24px;
  border-right: 1px solid #9b9b9b;
  border-bottom: 2px solid #217346;
  border-left: 1px solid #9b9b9b;
  background: #fff;
  color: #217346;
  font-size: 12px;
  font-weight: 700;
}
.add {
  align-self: flex-start;
  margin: 5px 0 0 33px;
}
.hscroll {
  display: flex;
  flex: none;
  align-items: center;
  width: 41%;
  height: 27px;
  margin-left: auto;
  padding-right: 19px;
}
.htrack {
  flex: 1;
  height: 15px;
  margin-right: 2px;
  background: #dadada;
}
.htrack i {
  display: block;
  width: 89%;
  height: 15px;
  border: 1px solid #ababab;
  background: #fff;
}

/* Status bar */
.status {
  display: flex;
  flex: none;
  align-items: center;
  justify-content: flex-end;
  height: 22px;
  padding-right: 19px;
  border-top: 1px solid #c6c6c6;
  background: #f3f2f1;
}
.view {
  display: grid;
  place-items: center;
  width: 38px;
  height: 21px;
}
.view.current {
  background: #c8c6c4;
}
.step {
  margin: 0 3px;
}
.zoom {
  width: 100px;
  height: 11px;
  appearance: none;
  background: linear-gradient(#ababab, #ababab) center / 100% 1px no-repeat;
}
.zoom::-webkit-slider-thumb {
  width: 5px;
  height: 11px;
  appearance: none;
  background: #666;
}
.percent {
  width: 32px;
  margin-left: 3px;
  text-align: right;
}
</style>
